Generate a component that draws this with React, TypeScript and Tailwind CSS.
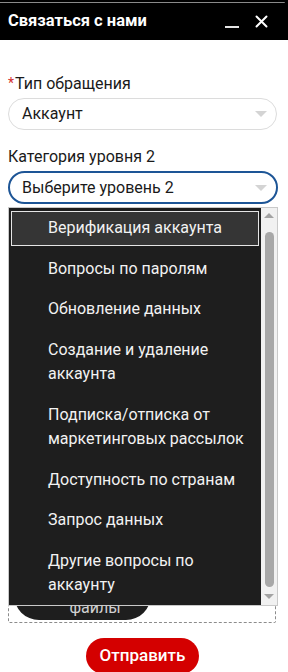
import { useState } from 'react';

const categories = [
  'Верификация аккаунта',
  'Вопросы по паролям',
  'Обновление данных',
  'Создание и удаление аккаунта',
  'Подписка/отписка от маркетинговых рассылок',
  'Доступность по странам',
  'Запрос данных',
  'Другие вопросы по аккаунту',
];

function Caret() {
  return (
    <span className="absolute right-[9px] top-1/2 -translate-y-1/2 w-0 h-0 border-x-[6px] border-x-transparent border-t-[6px] border-t-[#d4d4d4]" />
  );
}

export default function App() {
  const [active] = useState(0);

  return (
    <div className="w-[288px] h-[672px] overflow-hidden bg-white font-['Roboto','Noto_Sans',sans-serif] text-[#1a1a1a]">
      {/* Window header */}
      <div className="relative h-[40px] bg-black flex items-center justify-between pl-2 pr-[20px]">
        <div className="absolute left-0 top-[2px] w-[285px] h-px bg-[#8a8a8a] rounded-tr-[3px]" />
        <span className="text-white text-[16.5px] font-bold leading-none mt-[2px]">Связаться с нами</span>
        <div className="flex items-center gap-[15px] mt-[2px]">
          <svg width="16" height="14" viewBox="0 0 16 14" className="mt-[2px]">
            <line x1="1" y1="12" x2="15" y2="12" stroke="#e5e5e5" strokeWidth="2" />
          </svg>
          <svg width="13" height="13" viewBox="0 0 13 13">
            <path d="M1.5 1.5 L11.5 11.5 M11.5 1.5 L1.5 11.5" stroke="#fff" strokeWidth="2" strokeLinecap="round" />
          </svg>
        </div>
      </div>

      {/* Form */}
      <div className="px-2 pt-[33px]">
        <label className="flex items-start text-[16px] leading-[22px]">
          <span className="text-[#d32f2f] text-[14px] mr-[1px] leading-[20px]">*</span>
          Тип обращения
        </label>
        <div className="relative mt-[3px] w-[269px] h-[32px] rounded-full border border-[#dcdcdc] flex items-center pl-[13px] text-[16px]">
          Аккаунт
          <Caret />
        </div>

        <label className="block mt-[16px] text-[16px] leading-[22px]">Категория уровня 2</label>
        <div className="relative mt-[3px] w-[270px]">
          <div className="relative h-[33px] rounded-full border-2 border-[#1d5596] flex items-center pl-[12px] text-[16px]">
            Выберите уровень 2
            <Caret />
          </div>

          {/* Open dropdown list */}
          <div className="absolute left-0 top-[36px] z-10 w-[270px] h-[399px] border border-[#c9c9c9] bg-[#1e1e1e] flex">
            <ul className="flex-1 overflow-hidden">
              {categories.map((c, i) => (
                <li key={c} className="px-[2px] py-[3px]">
                  <div
                    className={
                      'border pl-[36px] pr-2 py-[4px] text-[16px] leading-[24.5px] text-[#f2f2f2] ' +
                      (i === active ? 'border-[#e6e6e6] bg-[#353535]' : 'border-transparent')
                    }
                  >
                    {c}
                  </div>
                </li>
              ))}
            </ul>
            {/* scrollbar */}
            <div className="w-[16px] bg-[#f1f1f1] flex flex-col items-center pt-[5px] pb-[6px]">
              <span className="w-0 h-0 border-x-[5px] border-x-transparent border-b-[5px] border-b-[#a3a3a3]" />
              <div className="mt-[14px] flex-1 w-[9px] rounded-full bg-[#a8a8a8]" />
              <span className="mt-[7px] w-0 h-0 border-x-[5px] border-x-transparent border-t-[5px] border-t-[#a3a3a3]" />
            </div>
          </div>
        </div>

        {/* Content hidden under the dropdown */}
        <label className="block mt-[14px] text-[16px] leading-[22px]">Описание</label>
        <div className="mt-[3px] w-[269px] h-[250px] rounded-[16px] border border-[#dcdcdc]" />

        <div className="mt-[24px] w-[268px] h-[106px] border border-dashed border-[#8c8c8c] rounded-[2px] flex items-end gap-3 px-[5px] pb-[2px]">
          <div className="w-[137px] h-[50px] rounded-[25px] bg-[#1e1e1e] text-[#d0d0d0] text-[16px] leading-[20px] flex flex-col items-center justify-center pl-[25px] pt-[6px]">
            <span>Прикрепить</span>
            <span>файлы</span>
          </div>
        </div>

        <div className="flex justify-center mt-[15px] pr-[3px]">
          <button className="w-[113px] h-[36px] rounded-full bg-[#d40000] text-white text-[17px] font-medium">
            Отправить
          </button>
        </div>
      </div>
    </div>
  );
}
